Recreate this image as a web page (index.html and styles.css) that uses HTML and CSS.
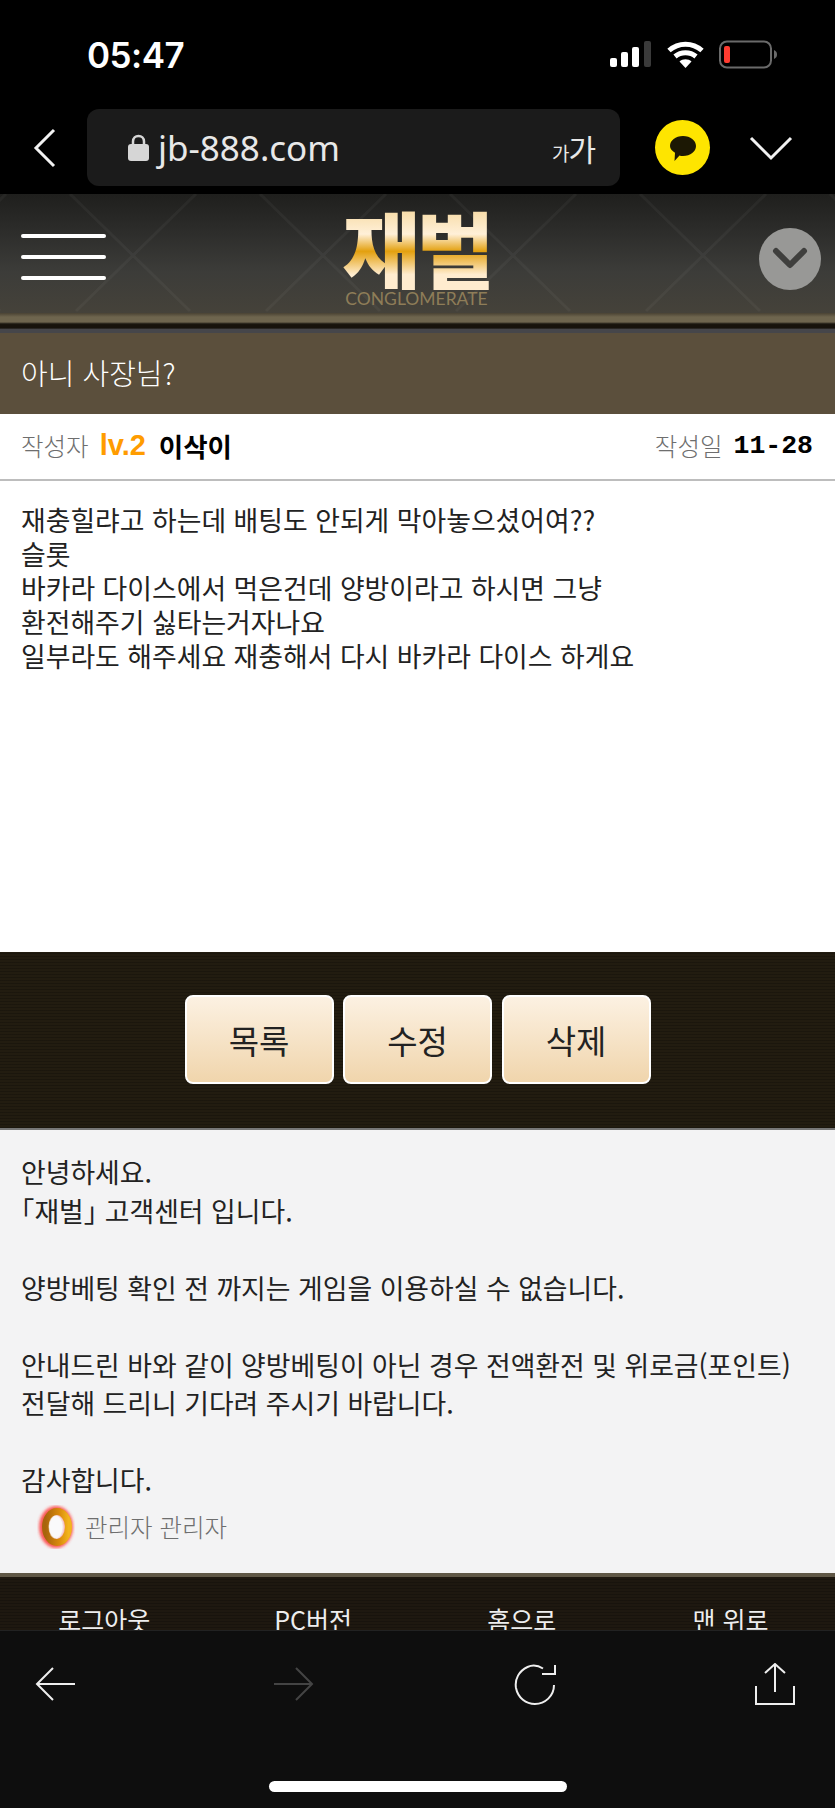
FILE: index.html
```html
<!DOCTYPE html>
<html lang="ko">
<head>
<meta charset="UTF-8" />
<meta name="viewport" content="width=device-width, initial-scale=1" />
<link rel="stylesheet" href="styles.css">
</head>
<body>

<div id="phone">

  <div class="status-bar">
    <div class="clock">05:47</div>
    <div class="status-icons">
      <svg class="signal" width="42" height="28" viewBox="0 0 42 28">
        <rect x="0" y="17" width="7" height="9" rx="2" fill="#fff" />
        <rect x="11" y="11" width="7" height="15" rx="2" fill="#fff" />
        <rect x="22" y="6" width="7" height="20" rx="2" fill="#fff" />
        <rect x="34" y="0" width="7" height="26" rx="2" fill="#3a3a3a" />
      </svg>
      <svg class="wifi" width="37" height="28" viewBox="0 0 37 28">
        <path d="M2 9.5C11.5 1 25.500 1 35 9.500M8 15.500C14 10.500 23 10.500 29 15.500" fill="none" stroke="#fff" stroke-width="5" />
        <path d="M18.500 27L12.500 20.500C15.500 17.500 21.500 17.500 24.500 20.500Z" fill="#fff" />
      </svg>
      <svg class="battery" width="59" height="30" viewBox="0 0 59 30">
        <rect x="1" y="1.500" width="51" height="26" rx="7" fill="none" stroke="#6a6a6a" stroke-width="2" />
        <rect x="5" y="6" width="6" height="17" rx="2" fill="#ff3b30" />
        <path d="M55 10C57.500 11 58 13 58 14.500C58 16 57.500 18 55 19Z" fill="#6a6a6a" />
      </svg>
    </div>
  </div>

  <div class="browser-bar">
    <svg class="nav-back" width="24" height="40" viewBox="0 0 24 40">
      <path d="M21 2L3 20L21 38" fill="none" stroke="#f2f2f2" stroke-width="3" />
    </svg>
    <div class="url-box">
      <svg class="lock" width="21" height="27" viewBox="0 0 21 27">
        <path d="M5 12V7.500C5 4 7.500 2 10.500 2C13.500 2 16 4 16 7.500V12" fill="none" stroke="#d6d6d6" stroke-width="2.500" />
        <rect x="0" y="10" width="21" height="17" rx="3" fill="#d6d6d6" />
      </svg>
      <span class="url-text">jb-888.com</span>
      <span class="font-size"><small>가</small>가</span>
    </div>
    <div class="kakao">
      <svg width="28" height="28" viewBox="0 0 28 28">
        <path d="M14 2C21.500 2 27 6.500 27 12C27 17.500 21.500 22 14 22C12.500 22 11.500 22 10.500 21.500L5.500 27L6 18.800C3 17 1 14.800 1 12C1 6.500 6.500 2 14 2Z" fill="#1c1804" />
      </svg>
    </div>
    <svg class="nav-more" width="44" height="26" viewBox="0 0 44 26">
      <path d="M2 3L22 23L42 3" fill="none" stroke="#f2f2f2" stroke-width="3" />
    </svg>
  </div>

  <div id="page">
    <div class="site-header">
      <svg class="header-pattern" width="835" height="119" viewBox="0 0 835 119">
        <path d="M-120 0L0 117M6 0L-114 117M70 0L190 117M196 0L76 117M260 0L380 117M386 0L266 117M450 0L570 117M576 0L456 117M640 0L760 117M766 0L646 117M830 0L950 117M956 0L836 117" fill="none" stroke="#fff" stroke-opacity="0.04" stroke-width="3" />
      </svg>
      <div class="menu-btn"><span></span><span></span><span></span></div>
      <div class="logo">
        <div class="logo-mark">재벌</div>
        <div class="logo-sub">CONGLOMERATE</div>
      </div>
      <div class="down-btn">
        <svg width="36" height="26" viewBox="0 0 36 26">
          <path d="M4 5L18 19L32 5" fill="none" stroke="#3f3f3d" stroke-width="6" stroke-linecap="round" stroke-linejoin="round" />
        </svg>
      </div>
    </div>
    <div class="header-trim"></div>

    <div class="post-title">아니 사장님?</div>

    <div class="post-meta">
      <div class="meta-left">
        <span class="meta-label">작성자</span>
        <span class="level">lv.2</span>
        <span class="meta-value">이삭이</span>
      </div>
      <div class="meta-right">
        <span class="meta-label">작성일</span>
        <span class="meta-date">11-28</span>
      </div>
    </div>

    <div class="post-body">
      재충힐랴고 하는데 배팅도 안되게 막아놓으셨어여??<br>
      슬롯<br>
      바카라 다이스에서 먹은건데 양방이라고 하시면 그냥<br>
      환전해주기 싫타는거자나요<br>
      일부라도 해주세요 재충해서 다시 바카라 다이스 하게요
    </div>

    <div class="action-bar">
      <button class="action-btn">목록</button>
      <button class="action-btn">수정</button>
      <button class="action-btn">삭제</button>
    </div>

    <div class="reply">
      <div class="reply-text">
        안녕하세요.<br>
        <span class="bracket">「</span>재벌<span class="bracket">」</span> 고객센터 입니다.<br>
        <br>
        양방베팅 확인 전 까지는 게임을 이용하실 수 없습니다.<br>
        <br>
        안내드린 바와 같이 양방베팅이 아닌 경우 전액환전 및 위로금(포인트)<br>
        전달해 드리니 기다려 주시기 바랍니다.<br>
        <br>
        감사합니다.
      </div>
      <div class="reply-author">
        <svg class="ring" width="38" height="44" viewBox="0 0 38 44">
          <defs>
            <filter id="ringGlow" x="-30%" y="-30%" width="160%" height="160%">
              <feGaussianBlur stdDeviation="1.800" />
            </filter>
            <linearGradient id="ringGold" x1="0" y1="0" x2="1" y2="0">
              <stop offset="0" stop-color="#a8640c" />
              <stop offset="0.6" stop-color="#d98a0a" />
              <stop offset="1" stop-color="#f2b41e" />
            </linearGradient>
          </defs>
          <ellipse cx="19" cy="22" rx="13" ry="17" fill="none" stroke="#ff3030" stroke-opacity="0.8" stroke-width="8" filter="url(#ringGlow)" />
          <ellipse cx="20" cy="22" rx="11.500" ry="15.500" fill="none" stroke="url(#ringGold)" stroke-width="7" />
          <ellipse cx="18.500" cy="22" rx="7" ry="11.500" fill="#fff" fill-opacity="0.6" />
        </svg>
        <span>관리자 관리자</span>
      </div>
    </div>

    <div class="site-footer">
      <a>로그아웃</a>
      <a>PC버전</a>
      <a>홈으로</a>
      <a>맨 위로</a>
    </div>
  </div>

  <div class="toolbar">
    <div class="toolbar-icons">
      <svg width="40" height="36" viewBox="0 0 40 36">
        <path d="M18 2L2 18L18 34M2 18H40" fill="none" stroke="#eee" stroke-width="2" />
      </svg>
      <svg width="40" height="36" viewBox="0 0 40 36">
        <path d="M22 2L38 18L22 34M38 18H0" fill="none" stroke="#444" stroke-width="2" />
      </svg>
      <svg width="42" height="42" viewBox="0 0 42 42">
        <path d="M29 5.500C25 3 19 1.500 13.500 4C5 8 0.500 16 2 25C4 35 12 41 21 41C31 41 40 33 40 22" fill="none" stroke="#eee" stroke-width="2" />
        <path d="M28 11H41V2" fill="none" stroke="#eee" stroke-width="2" />
      </svg>
      <svg width="40" height="42" viewBox="0 0 40 42">
        <path d="M10 10L20 1L30 10M20 1V29M1 23V41H39V23" fill="none" stroke="#eee" stroke-width="2" />
      </svg>
    </div>
    <div class="home-bar"></div>
  </div>

</div>

</body>
</html>
```

FILE: styles.css
```css
* {
  box-sizing: border-box;
}

body {
  margin: 0;
  background: #000;
  font-family: "Noto Sans CJK KR", "Noto Sans", sans-serif;
  color: #222;
}

#phone {
  display: flex;
  flex-direction: column;
  width: 835px;
  height: 1808px;
  overflow: hidden;
}

.status-bar {
  display: flex;
  justify-content: space-between;
  align-items: center;
  height: 109px;
  padding: 0 57px 0 87px;
  background: #000;
}

.clock {
  font-family: Inter, "Noto Sans", sans-serif;
  font-size: 35px;
  font-weight: 600;
  color: #fff;
  letter-spacing: -0.5px;
}

.status-icons {
  display: flex;
  align-items: center;
  gap: 15px;
}

.browser-bar {
  display: flex;
  align-items: center;
  height: 85px;
  padding: 0 0 8px 33px;
  background: #000;
}

.nav-back {
  flex-shrink: 0;
  margin-right: 30px;
}

.url-box {
  display: flex;
  align-items: center;
  width: 533px;
  height: 77px;
  padding: 0 25px 0 41px;
  background: #1b1b1b;
  border-radius: 12px;
}

.lock {
  flex-shrink: 0;
  margin-right: 9px;
}

.url-text {
  flex-grow: 1;
  font-family: "Noto Sans", sans-serif;
  font-size: 35px;
  color: #e8e8e8;
}

.font-size {
  font-size: 30px;
  color: #e8e8e8;
  letter-spacing: -1px;
}

.font-size small {
  font-size: 19px;
}

.kakao {
  display: flex;
  justify-content: center;
  align-items: center;
  width: 55px;
  height: 55px;
  margin-left: 35px;
  background: #fee500;
  border-radius: 50%;
}

.nav-more {
  margin-left: 39px;
}

#page {
  flex: 1;
  min-height: 0;
  overflow: hidden;
  background: #fff;
}

.site-header {
  position: relative;
  display: flex;
  justify-content: space-between;
  align-items: center;
  height: 119px;
  padding: 0 14px 0 21px;
  background: linear-gradient(#1f1f1d, #2c2c2a 30%, #3c3c39 65%, #45423a);
}

.header-pattern {
  position: absolute;
  top: 0;
  left: 0;
}

.menu-btn {
  position: relative;
  display: flex;
  flex-direction: column;
  gap: 17px;
  width: 85px;
  margin-top: 7px;
}

.menu-btn span {
  height: 4px;
  background: #fff;
  border-radius: 2px;
}

.logo {
  position: relative;
  display: flex;
  flex-direction: column;
  align-items: center;
  margin-top: 4px;
  padding-right: 32px;
}

.logo-mark {
  font-size: 85px;
  font-weight: 900;
  line-height: 86px;
  letter-spacing: -4px;
  background: linear-gradient(#f7dca8 8%, #fff0d8 35%, #e3a00e 55%, #ffeccf 82%);
  -webkit-background-clip: text;
  background-clip: text;
  color: transparent;
}

.logo-sub {
  font-family: Lato, "Noto Sans", sans-serif;
  font-size: 17.500px;
  line-height: 18px;
  color: #8e7d58;
}

.down-btn {
  position: relative;
  display: flex;
  justify-content: center;
  align-items: center;
  width: 62px;
  height: 62px;
  margin-top: 11px;
  background: #989896;
  border-radius: 50%;
}

.header-trim {
  height: 20px;
  background: linear-gradient(#4a4334, #6e654e 20%, #6e654e 45%, #2e2a20 52%, #17130c 58%, #17130c 76%, #46464a 80%);
}

.post-title {
  display: flex;
  align-items: center;
  height: 81px;
  padding: 0 21px 4px;
  background: #5b4f3c;
  color: #fff;
  font-size: 29px;
  font-weight: 300;
}

.post-meta {
  display: flex;
  justify-content: space-between;
  align-items: center;
  height: 67px;
  padding: 0 22px 2px 21px;
  background: #fff;
  border-bottom: 2px solid #bdbdbd;
  font-size: 24.500px;
}

.meta-left,
.meta-right {
  display: flex;
  align-items: center;
  gap: 11px;
}

.meta-label {
  color: #6e6e6e;
  font-weight: 300;
}

.level {
  font-family: "Liberation Sans", sans-serif;
  font-size: 29px;
  font-weight: 700;
  color: #ff9c00;
  margin-right: 2px;
}

.meta-value {
  color: #000;
  font-size: 26.500px;
  font-weight: 700;
}

.meta-date {
  font-family: "Liberation Mono", monospace;
  font-size: 26.500px;
  font-weight: 700;
  color: #000;
}

.post-body {
  height: 471px;
  padding: 22px 21px 0;
  background: #fff;
  color: #222;
  font-size: 26.850px;
  line-height: 34px;
}

.action-bar {
  display: flex;
  justify-content: center;
  align-items: flex-start;
  gap: 9.500px;
  height: 178px;
  padding-top: 43px;
  background-color: #221c10;
  background-image: repeating-linear-gradient(0deg, rgba(0, 0, 0, 0.2) 0 1px, transparent 1px 3px);
  border-bottom: 2px solid #777;
}

.action-btn {
  width: 149px;
  height: 89px;
  padding: 0;
  font-family: inherit;
  font-size: 33px;
  color: #222;
  background: linear-gradient(#fcf1e2, #f0d5ac);
  border: 2px solid #fff;
  border-radius: 8px;
}

.reply {
  height: 447px;
  padding: 23px 21px 0;
  background: #f3f3f4;
  border-bottom: 4px solid #5f5746;
}

.reply-text {
  font-size: 26.850px;
  line-height: 38.500px;
  color: #222;
  white-space: nowrap;
}

.bracket {
  font-feature-settings: "halt";
}

.reply-author {
  display: flex;
  align-items: center;
  gap: 10px;
  padding-left: 16px;
  margin-top: 5px;
  font-size: 24.500px;
  font-weight: 300;
  color: #6e6e6e;
}

.site-footer {
  display: grid;
  grid-template-columns: repeat(4, 1fr);
  padding-top: 24px;
  height: 120px;
  background-color: #1e1810;
  background-image: repeating-linear-gradient(0deg, rgba(0, 0, 0, 0.2) 0 1px, transparent 1px 3px);
  color: #eee;
  font-size: 25px;
  text-align: center;
}

.toolbar {
  flex-shrink: 0;
  display: flex;
  flex-direction: column;
  align-items: center;
  height: 178px;
  padding-top: 32px;
  background: #0e0e0e;
  border-top: 1px solid #222;
}

.toolbar-icons {
  display: flex;
  justify-content: space-between;
  align-items: center;
  width: 100%;
  padding: 0 40px 0 35px;
}

.home-bar {
  width: 298px;
  height: 11px;
  margin-top: 76px;
  background: #fff;
  border-radius: 6px;
}
```
